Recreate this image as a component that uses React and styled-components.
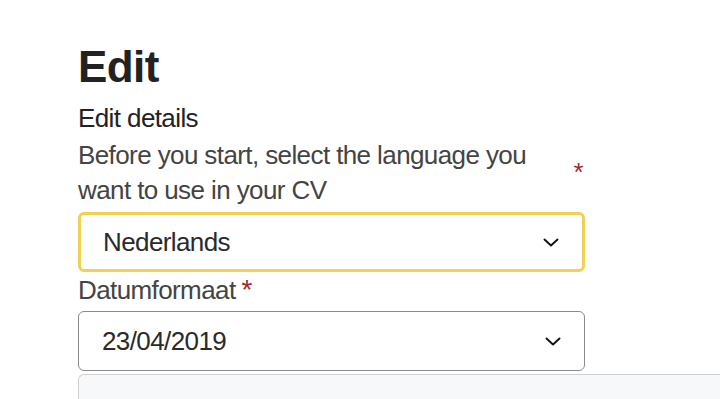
import React from "react";
import styled, { createGlobalStyle } from "styled-components";

const Global = createGlobalStyle`
  html, body {
    margin: 0;
    padding: 0;
    background: #ffffff;
    font-family: "Liberation Sans", Arial, sans-serif;
    color: #333333;
    overflow: hidden;
  }
`;

const Page = styled.div`
  padding: 39px 0 0 78px;
  width: 720px;
  box-sizing: border-box;
  height: 399px;
  overflow: hidden;
`;

const Title = styled.h1`
  margin: 0;
  font-size: 44px;
  font-weight: 700;
  color: #222222;
  line-height: 56px;
  letter-spacing: -0.6px;
`;

const SubTitle = styled.div`
  font-size: 26px;
  line-height: 30px;
  letter-spacing: -0.6px;
  color: #222222;
  margin-top: 8px;
`;

const Form = styled.div`
  width: 507px;
  margin-top: 5px;
`;

const LabelRow = styled.div`
  display: flex;
  align-items: flex-start;
  justify-content: ${(p) => (p.$spread ? "space-between" : "flex-start")};
  font-size: 26px;
  line-height: 35px;
  letter-spacing: -0.6px;
  color: #444444;
`;

const LabelText = styled.span`
  max-width: ${(p) => p.$max || "none"};
`;

const Star = styled.span`
  color: #a4262c;
  font-size: ${(p) => (p.$right ? "26px" : "28px")};
  margin-left: 6px;
  margin-right: ${(p) => (p.$right ? "2px" : "0")};
  margin-top: ${(p) => (p.$right ? "17px" : "0")};
`;

const Select = styled.div`
  display: flex;
  align-items: center;
  justify-content: space-between;
  height: 60px;
  box-sizing: border-box;
  margin-top: ${(p) => p.$mt || "0"};
  padding: 0 22px 0 ${(p) => (p.$focus ? "22px" : "23px")};
  border: ${(p) => (p.$focus ? "3px solid #f0d154" : "1px solid #8a8a8a")};
  border-radius: 6px;
  font-size: 26px;
  letter-spacing: -0.6px;
  color: #2a2a2a;
  background: #ffffff;
`;

const Label2 = styled(LabelRow)`
  margin-top: 0;
  margin-bottom: 3px;
  line-height: 36px;
`;

const Panel = styled.div`
  margin-top: 3px;
  height: 40px;
  width: 660px;
  border: 1px solid #cfcfcf;
  border-right: none;
  border-radius: 6px 0 0 0;
  background: #f7f8fa;
`;

const Chevron = () => (
  <svg width="18" height="12" viewBox="0 0 18 12">
    <path d="M2.5 3.5 L9 9.5 L15.5 3.5" fill="none" stroke="#111" strokeWidth="1.9" strokeLinecap="round" strokeLinejoin="round" />
  </svg>
);

export default function App() {
  return (
    <Page>
      <Global />
      <Title>Edit</Title>
      <SubTitle>Edit details</SubTitle>
      <Form>
        <LabelRow $spread>
          <LabelText $max="470px">Before you start, select the language you want to use in your CV</LabelText>
          <Star $right>*</Star>
        </LabelRow>
        <Select $focus $mt="4px">
          <span>Nederlands</span>
          <Chevron />
        </Select>
        <Label2>
          <span>Datumformaat</span>
          <Star>*</Star>
        </Label2>
        <Select>
          <span>23/04/2019</span>
          <Chevron />
        </Select>
      </Form>
      <Panel />
    </Page>
  );
}
